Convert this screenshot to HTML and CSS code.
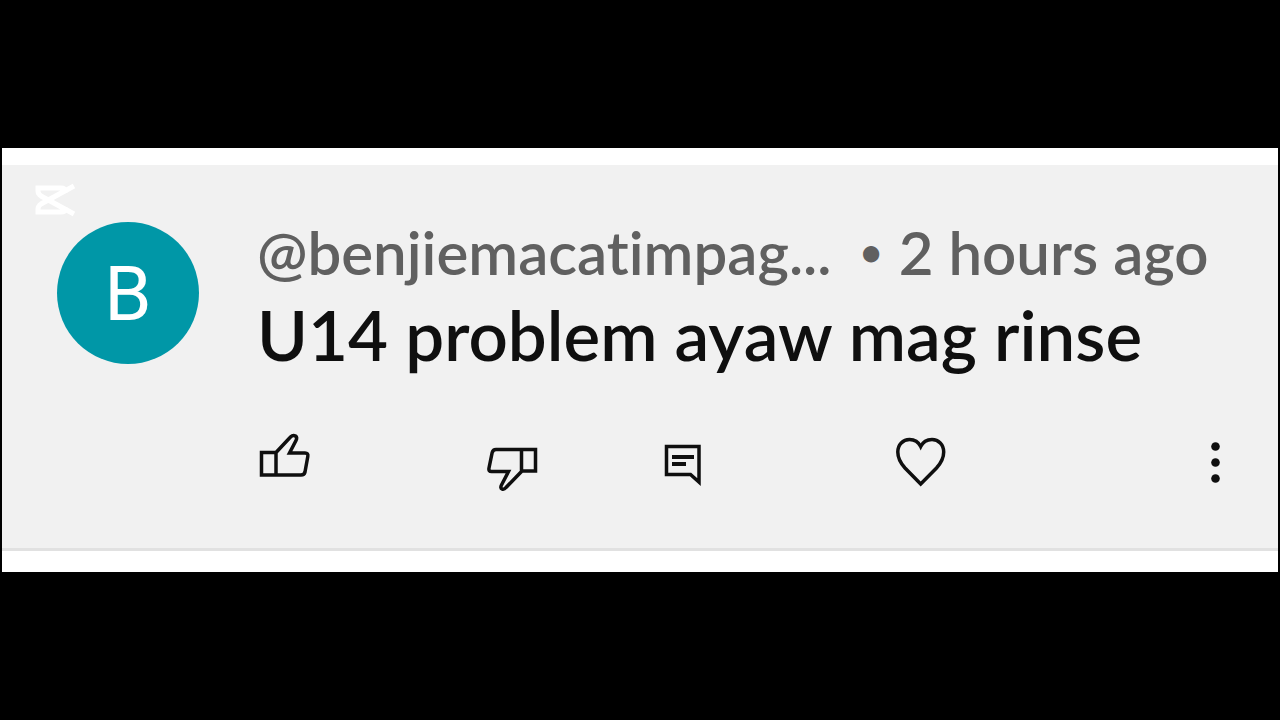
FILE: index.html
```html
<!doctype html>
<html lang="en">
<head>
  <meta charset="utf-8">
  <title>Comment</title>
  <link rel="stylesheet" href="styles.css">
</head>
<body>
  <main class="frame">
    <svg class="watermark" viewBox="0 0 44 36" aria-hidden="true">
      <path d="M41 4L8 22Q5 24 5 27V30H28Q32 30 32 27V25M32 11V9Q32 6 28 6H5V9Q5 12 8 14L41 32"/>
    </svg>
    <article class="comment">
      <div class="avatar">B</div>
      <div class="content">
        <header class="meta">
          <a class="author" href="#">@benjiemacatimpag...</a>
          <span class="time"><span class="bullet">•</span>2 hours ago</span>
        </header>
        <p class="text">U14 problem ayaw mag rinse</p>
        <div class="actions">
          <button type="button" aria-label="Like">
            <svg width="54" height="60" viewBox="0 0 54 60">
              <path d="M4.500 20.500H19V43H4.500ZM19 20.500L33.500 5Q36 2.500 38.500 4Q40.500 5.500 39 8.500L32.500 21H48Q51.500 21 50.800 24.500L48 40Q47.300 43 44 43H19"/>
            </svg>
          </button>
          <button type="button" aria-label="Dislike">
            <svg width="54" height="60" viewBox="0 0 54 60">
              <path d="M36.500 17.500H50.500V39H36.500ZM36.500 17.500H11Q8 17.500 7.200 20.500L4 36Q3.300 39.500 6.500 39.500H23.500L16.500 53Q15 56 17 57Q19 58 21 55.500L36.500 39.500"/>
            </svg>
          </button>
          <button type="button" aria-label="Reply">
            <svg width="54" height="60" viewBox="0 0 54 60">
              <path d="M3.500 14.500H36V50L27.500 42.500H3.500Z"/>
              <path class="lines" d="M9 25H31M9 32H23"/>
            </svg>
          </button>
          <button type="button" aria-label="Heart">
            <svg width="54" height="60" viewBox="0 0 54 60">
              <path d="M26.700 52L11 36C6 30.500 3.800 26 3.800 20C3.800 12.500 9 7.500 15.500 7.500C21 7.500 24.500 10 26.700 14.500C28.900 10 32.500 7.500 38 7.500C44.500 7.500 49.700 12.500 49.700 20C49.700 26 47.500 30.500 42.500 36Z"/>
            </svg>
          </button>
          <button type="button" aria-label="More">
            <svg class="dots" width="12" height="60" viewBox="0 0 12 60">
              <circle cx="5.500" cy="14.500" r="4.300"/>
              <circle cx="5.500" cy="30.500" r="4.300"/>
              <circle cx="5.500" cy="46.500" r="4.300"/>
            </svg>
          </button>
        </div>
      </div>
    </article>
  </main>
</body>
</html>
```
FILE: styles.css
```css
body {
  display: flex;
  flex-direction: column;
  justify-content: center;
  min-height: 100vh;
  margin: 0;
  background: #000;
  font-family: Lato, "Noto Sans", sans-serif;
}
.frame {
  position: relative;
  margin: 0 2px;
  padding: 17px 0 21px;
  background: #fff;
}
.watermark {
  position: absolute;
  top: 34px;
  left: 31px;
  width: 44px;
  fill: none;
  stroke: #fff;
  stroke-width: 5;
}
.comment {
  display: flex;
  gap: 58px;
  padding: 57px 56px 56px 55px;
  background: #f1f1f1;
  border-bottom: 3px solid #e1e1e1;
}
.avatar {
  flex: none;
  width: 142px;
  height: 142px;
  border-radius: 50%;
  background: #0097a7;
  color: #fff;
  font: 76px/144px Roboto, sans-serif;
  text-align: center;
}
.content {
  flex: 1;
  min-width: 0;
}
.meta {
  display: flex;
  gap: 28px;
  color: #606060;
  font-size: 60px;
  font-weight: 600;
  line-height: 60px;
  white-space: nowrap;
  font-variant-ligatures: none;
}
.author {
  color: inherit;
  text-decoration: none;
}
.time {
  display: flex;
}
.bullet {
  margin-right: 16px;
  font-size: 40px;
}
.text {
  margin: 9px 0 0;
  color: #0f0f0f;
  font-size: 69px;
  font-weight: 600;
  line-height: 88px;
}
.actions {
  display: grid;
  grid-template-columns: 228fr 178fr 230fr 316fr 12px;
  margin-top: 53px;
}
button {
  display: flex;
  padding: 0;
  border: 0;
  background: none;
  cursor: pointer;
}
button svg {
  fill: none;
  stroke: #0f0f0f;
  stroke-width: 3.5;
}
button .lines {
  stroke-width: 4;
}
button .dots {
  fill: #0f0f0f;
  stroke: none;
}
```
